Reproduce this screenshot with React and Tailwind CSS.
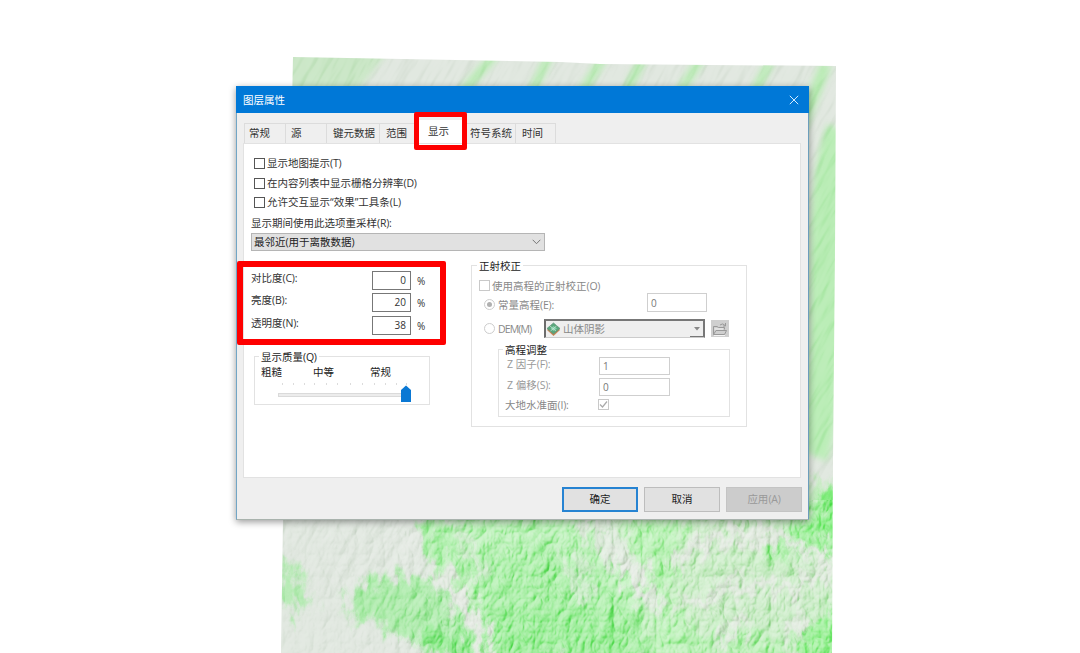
import React from "react";

const FONT =
  "font-['Open_Sans','Noto_Sans_CJK_SC',sans-serif] text-[10.5px] leading-[14px] whitespace-nowrap";

/* Shaded relief map behind the dialog */
function Terrain() {
  return (
    <svg className="absolute left-0 top-0" width="1080" height="653" viewBox="0 0 1080 653">
      <defs>
        <clipPath id="extent">
          <path d="M293 57L560 62L600 64L836 66L835 250L833 460L832 653H281L283 520L288 300Z" />
        </clipPath>
        <filter id="ragged" x="-10%" y="-10%" width="120%" height="120%" colorInterpolationFilters="sRGB">
          <feGaussianBlur stdDeviation="5" result="b" />
          <feTurbulence type="fractalNoise" baseFrequency="0.09 0.05" numOctaves="4" seed="8" result="n" />
          <feDisplacementMap in="b" in2="n" scale="46" xChannelSelector="R" yChannelSelector="G" />
        </filter>
        <filter id="soft" x="-20%" y="-20%" width="140%" height="140%" colorInterpolationFilters="sRGB">
          <feGaussianBlur stdDeviation="3" />
        </filter>
        <filter id="relief" x="0" y="0" width="100%" height="100%" colorInterpolationFilters="sRGB">
          <feTurbulence type="turbulence" baseFrequency="0.07 0.045" numOctaves="3" seed="21" result="n" />
          <feDiffuseLighting in="n" surfaceScale="3" diffuseConstant="0.74" lightingColor="#ffffff">
            <feDistantLight azimuth="225" elevation="52" />
          </feDiffuseLighting>
        </filter>
        <filter id="streaks" x="0" y="0" width="100%" height="100%" colorInterpolationFilters="sRGB">
          <feTurbulence type="fractalNoise" baseFrequency="0.015 0.08" numOctaves="3" seed="4" result="n" />
          <feDiffuseLighting in="n" surfaceScale="6" diffuseConstant="0.68" lightingColor="#ffffff">
            <feDistantLight azimuth="225" elevation="52" />
          </feDiffuseLighting>
        </filter>
        <linearGradient id="fade" gradientUnits="userSpaceOnUse" x1="280" y1="0" x2="480" y2="0">
          <stop offset="0" stopColor="#444" />
          <stop offset=".5" stopColor="#777" />
          <stop offset="1" stopColor="#fff" />
        </linearGradient>
        <mask id="east">
          <rect x="270" y="500" width="580" height="160" fill="url(#fade)" />
        </mask>
      </defs>
      <g clipPath="url(#extent)">
        <rect x="270" y="50" width="580" height="610" fill="#e0e7df" />
        <path d="M285 50H390L370 75L350 100H285Z" fill="#c9e6c5" filter="url(#soft)" />
        <g stroke="#b8eab3" fill="none" filter="url(#soft)">
          <path d="M495 55L462 92M552 50L532 92M605 55L580 95M700 60L678 95M642 60L625 95M770 62L754 92" strokeWidth="9" />
          <path d="M826 64L800 130" strokeWidth="12" />
          <path d="M842 130C818 190 828 290 824 360C819 410 822 430 812 455" stroke="#b8ecb4" strokeWidth="31" />
        </g>
        <g filter="url(#ragged)">
          <path d="M500 505H590L640 600L665 653H490L480 610L430 560L428 515Z" fill="#b3efb0" />
          <path d="M600 505L840 480V660H640L650 590Z" fill="#c6ebc2" />
          <path d="M620 520L690 505L670 570L690 660H650L655 590Z" fill="#b4f0b0" />
          <path d="M470 560L550 550L630 610L658 660H490Z" fill="#a3eda0" />
          <path d="M490 620L560 605L620 630L640 665H480Z" fill="#97ec94" />
          <path d="M345 600L375 575L440 580L460 610L475 655H430L390 628L355 618Z" fill="#aaeaa8" />
          <path d="M278 562L295 568L313 600L300 612L278 608Z" fill="#b2eab0" />
          <path d="M425 515L450 525L465 580L450 580L430 550Z" fill="#aaeea7" />
          <path d="M420 630L475 630L480 660H430Z" fill="#8ae888" />
          <path d="M780 530L845 490V560L800 556L765 560Z" fill="#97ee93" />
          <path d="M815 500L845 480V545L822 535Z" fill="#78eb74" />
          <path d="M690 630L790 640L785 665H670Z" fill="#b0eeac" />
          <path d="M800 630L845 600V670H800Z" fill="#94ee90" />
        </g>
        <g fill="none" stroke="#e1e6df" filter="url(#ragged)">
          <path d="M585 510Q603 550 625 568T665 610" strokeWidth="13" />
          <path d="M434 570Q465 600 475 625T490 660" strokeWidth="14" />
          <path d="M675 565Q700 535 745 535T835 566" strokeWidth="14" />
          <path d="M455 520Q480 550 475 590M575 550L585 610" strokeWidth="7" />
          <path d="M685 610L730 585L800 590L825 570M720 650L745 610M790 640L800 610" strokeWidth="12" />
        </g>
        <g mask="url(#east)" className="mix-blend-soft-light">
          <rect x="270" y="500" width="580" height="160" filter="url(#relief)" />
        </g>
        <g mask="url(#east)" className="mix-blend-overlay" opacity=".4">
          <rect x="270" y="500" width="580" height="160" filter="url(#relief)" />
        </g>
        <g transform="rotate(-60 560 200)">
          <rect x="100" y="-100" width="1000" height="700" filter="url(#streaks)" opacity=".5" className="mix-blend-soft-light" />
        </g>
      </g>
    </svg>
  );
}

function Key({ children }) {
  return <span className="tracking-[-0.2px]">{children}</span>;
}

function Box({ checked, dim }) {
  return (
    <span className={`flex size-[11px] shrink-0 items-center justify-center border bg-white ${dim ? "border-[#c9c9c9]" : "border-[#555]"}`}>
      {checked && (
        <svg width="9" height="9" viewBox="0 0 9 9" fill="none" stroke="#aaa" strokeWidth="1.2">
          <path d="M1 4.5L3.5 7L8 1.5" />
        </svg>
      )}
    </span>
  );
}

function Radio({ on }) {
  return (
    <span className="flex size-[11px] shrink-0 items-center justify-center rounded-full border border-[#cdcdcd] bg-white">
      {on && <span className="size-[5px] rounded-full bg-[#b0b0b0]" />}
    </span>
  );
}

function Group({ title, className, titleClass, children }) {
  return (
    <section className={`border border-[#e2e2e2] ${className}`}>
      <div className="flex h-0 items-center">
        <span className={`bg-white text-[#222] ${titleClass}`}>{title}</span>
      </div>
      {children}
    </section>
  );
}

function Tab({ label, className }) {
  return <div className={`h-[20px] shrink-0 border-r border-t border-[#dcdcdc] pt-[2px] ${className}`}>{label}</div>;
}

function Level({ label, hot, value, className }) {
  return (
    <div className={`flex h-[19px] items-center ${className}`}>
      <span className="-mt-[5px] w-[121px]">
        {label}
        <Key>({hot}):</Key>
      </span>
      <span className="flex h-[19px] w-[39px] items-center justify-end border border-[#777] bg-white pb-px pr-[4px] text-[10px]">{value}</span>
      <span className="ml-[6px] text-[10px]">%</span>
    </div>
  );
}

function Field({ value, className }) {
  return <span className={`flex items-center border border-[#cfcfcf] bg-white pl-[3px] text-[10px] text-[#777] ${className}`}>{value}</span>;
}

function Quality() {
  return (
    <Group title={<>显示质量<Key>(Q)</Key></>} titleClass="ml-[4px] px-[2px]" className="ml-[10px] mt-[21px] h-[49px] w-[176px]">
      <div className="flex pl-[6px] pt-[8px] text-[#222]">
        <span className="w-[52px]">粗糙</span>
        <span className="w-[57px]">中等</span>
        <span>常规</span>
      </div>
      <svg className="ml-[20px] mt-[4px] block" width="142" height="22" viewBox="0 0 142 22">
        <path d="M7.500 0v2M18.500 0v2M29.500 0v2M39.500 0v2M51.500 0v2M62.500 0v2M75.500 0v2M87.500 0v2M99.500 0v2M110.500 0v2M121.500 0v2M131.500 0v2" stroke="#dcdcdc" />
        <rect x="3.500" y="10.500" width="124" height="3" fill="#ececec" stroke="#dadada" />
        <path d="M126 7L131 2.500L136 7V19H126Z" fill="#0a78d4" />
      </svg>
    </Group>
  );
}

function Ortho() {
  return (
    <Group title="正射校正" titleClass="ml-[5px] px-[2px]" className="ml-[41px] mt-[14px] h-[162px] w-[276px] text-[#888]">
      <div className="mt-[14px] flex h-[11px] items-center gap-[2px] pl-[7px]">
        <Box dim />
        <span>使用高程的正射校正<Key>(O)</Key></span>
      </div>
      <div className="mt-[4px] flex h-[19px] items-center pl-[12px]">
        <Radio on />
        <span className="ml-[3px] mt-px w-[149px]">常量高程<Key>(E):</Key></span>
        <Field value="0" className="-mt-[4px] h-[19px] w-[60px]" />
      </div>
      <div className="mt-[5px] flex h-[19px] items-center pl-[12px]">
        <Radio />
        <span className="ml-[3px] w-[46px] tracking-[-0.9px]">DEM(M)</span>
        <span className="flex h-[19px] w-[161px] items-center border-b border-l-2 border-r border-t-2 border-b-[#ccc] border-l-[#6c6c6c] border-r-[#777] border-t-[#777] bg-[#efefef]">
          <svg className="shrink-0" width="15" height="15" viewBox="0 0 15 15">
            <path d="M1 8L7.500 2.500L14 8L7.500 14Z" fill="#c98655" />
            <path d="M1 6.500L7.500 1L14 6.500L7.500 12Z" fill="#5aa77b" stroke="#5a9179" strokeWidth=".7" />
            <path d="M4.500 6.500L7.500 4L11 6.500L7.500 9Z" fill="#82cfae" />
            <path d="M4 4L10 9M10.500 4L4.500 9" stroke="#d5ead9" strokeWidth=".7" />
          </svg>
          <span className="ml-[2px] grow">山体阴影</span>
          <span className="flex h-[16px] w-[14px] items-center justify-center border-b border-r border-[#777] bg-[#eee]">
            <svg width="6" height="4" viewBox="0 0 6 4"><path d="M0 0H6L3 3.500Z" fill="#888" /></svg>
          </span>
        </span>
        <span className="ml-[6px] flex h-[17px] w-[18px] items-center justify-center bg-[#cfcfcf]">
          <svg width="16" height="14" viewBox="0 0 16 14" fill="none" stroke="#999">
            <path d="M1.500 12.500V4.500H5L6.500 5.500H12.500V7.500M1.500 12.500L4 8.500H14.500L12.500 12.500Z" />
            <path d="M8 3Q11 .5 13 3.500M13.500 1V4H11" />
            <path d="M2.500 7H11M2 13.500H13" stroke="#f4f4f4" />
          </svg>
        </span>
      </div>
      <Group title="高程调整" titleClass="ml-[4px] px-[2px]" className="ml-[26px] mt-[11px] h-[68px] w-[232px]">
        <div className="mt-[7px] flex h-[18px] items-center pl-[8px] text-[#999]">
          <span className="-mt-[5px] w-[92px]">Z 因子<Key>(F):</Key></span>
          <Field value="1" className="h-[18px] w-[71px]" />
        </div>
        <div className="mt-[3px] flex h-[18px] items-center pl-[8px] text-[#999]">
          <span className="-mt-[5px] w-[92px]">Z 偏移<Key>(S):</Key></span>
          <Field value="0" className="h-[18px] w-[71px]" />
        </div>
        <div className="mt-[2px] flex h-[13px] items-center pl-[6px]">
          <span className="w-[93px]">大地水准面<Key>(I):</Key></span>
          <Box dim checked />
        </div>
      </Group>
    </Group>
  );
}

function Action({ children, className }) {
  return <button className={`flex h-[25px] w-[76px] items-center justify-center pb-[2px] ${className}`}>{children}</button>;
}

export default function App() {
  return (
    <main className={`relative h-[653px] w-[1080px] overflow-hidden bg-white pl-[236px] pt-[86px] text-[#333] ${FONT}`}>
      <Terrain />
      <div className="relative flex h-[434px] w-[573px] flex-col bg-[#efefef] shadow-[0_2px_7px_rgba(0,0,0,0.4)]">
        <header className="flex h-[27px] shrink-0 items-center justify-between bg-[#0078d7] pl-[7px] pr-[10px] text-white">
          <span className="text-[10.5px]">图层属性</span>
          <svg width="10" height="10" viewBox="0 0 10 10" stroke="#d4ecff" strokeWidth="1"><path d="M.8 .8L9.200 9.200M9.200 .8L.8 9.200" /></svg>
        </header>
        <div className="flex grow flex-col border-x border-b border-l-[#72a6c6] border-r-[#6c9ebc] border-b-[#a9b3ad] pl-[6px] pr-[7px] pt-[10px]">
          <nav className="flex h-[20px] shrink-0 pl-[1px]">
            <Tab label="常规" className="w-[42px] border-l pl-[4px]" />
            <Tab label="源" className="w-[41px] pl-[5px]" />
            <Tab label="键元数据" className="w-[53px] pl-[6px]" />
            <Tab label="范围" className="w-[38px] pl-[6px]" />
            <div className="-mt-[3px] h-[24px] w-[47px] bg-white pl-[10px] pt-[4px]">显示</div>
            <Tab label="符号系统" className="w-[51px] pl-[5px]" />
            <Tab label="时间" className="w-[40px] pl-[6px]" />
          </nav>
          <div className="flex h-[335px] shrink-0 flex-col border border-[#e2e2e2] bg-white">
            <div className="flex h-[79px] shrink-0 flex-col pl-[10px] pt-[12px]">
              <div className="flex h-[14px] items-center gap-[2px]"><Box /><span>显示地图提示<Key>(T)</Key></span></div>
              <div className="mt-[6px] flex h-[14px] items-center gap-[2px]"><Box /><span>在内容列表中显示栅格分辨率<Key>(D)</Key></span></div>
              <div className="mt-[5px] flex h-[14px] items-center gap-[2px]"><Box /><span>允许交互显示“效果”工具条<Key>(L)</Key></span></div>
            </div>
            <div className="-mt-[7px] pl-[7px]">
              <div className="h-[17px]">显示期间使用此选项重采样<Key>(R):</Key></div>
              <div className="flex h-[18px] w-[294px] items-center justify-between border border-[#b5b5b5] bg-[#e1e1e1] pl-[2px] pr-[3px] text-[#222]">
                <span>最邻近<Key>(</Key>用于离散数据<Key>)</Key></span>
                <svg width="9" height="6" viewBox="0 0 9 6" fill="none" stroke="#777"><path d="M.7 .8L4.500 4.700L8.300 .8" /></svg>
              </div>
            </div>
            <div className="flex">
              <div className="w-[186px]">
                <div className="pl-[7px] pt-[20px]">
                  <Level label="对比度" hot="C" value="0" />
                  <Level label="亮度" hot="B" value="20" className="mt-[3px]" />
                  <Level label="透明度" hot="N" value="38" className="mt-[4px]" />
                </div>
                <Quality />
              </div>
              <Ortho />
            </div>
          </div>
          <footer className="-mr-px flex justify-end gap-[6px] pt-[9px] text-[#222]">
            <Action className="border-2 border-[#2683d2] bg-[#e1e1e1]">确定</Action>
            <Action className="border border-[#bdbdbd] bg-[#e1e1e1]">取消</Action>
            <Action className="border border-[#c4c4c4] bg-[#cccccc] text-[#999]">应用<Key>(A)</Key></Action>
          </footer>
        </div>
      </div>
      <div className="absolute left-[414px] top-[112px] h-[38px] w-[53px] rounded-[2px] border-[5px] border-[#fe0000]" />
      <div className="absolute left-[237px] top-[261px] h-[84px] w-[209px] rounded-[2px] border-[6px] border-[#fe0000]" />
    </main>
  );
}
